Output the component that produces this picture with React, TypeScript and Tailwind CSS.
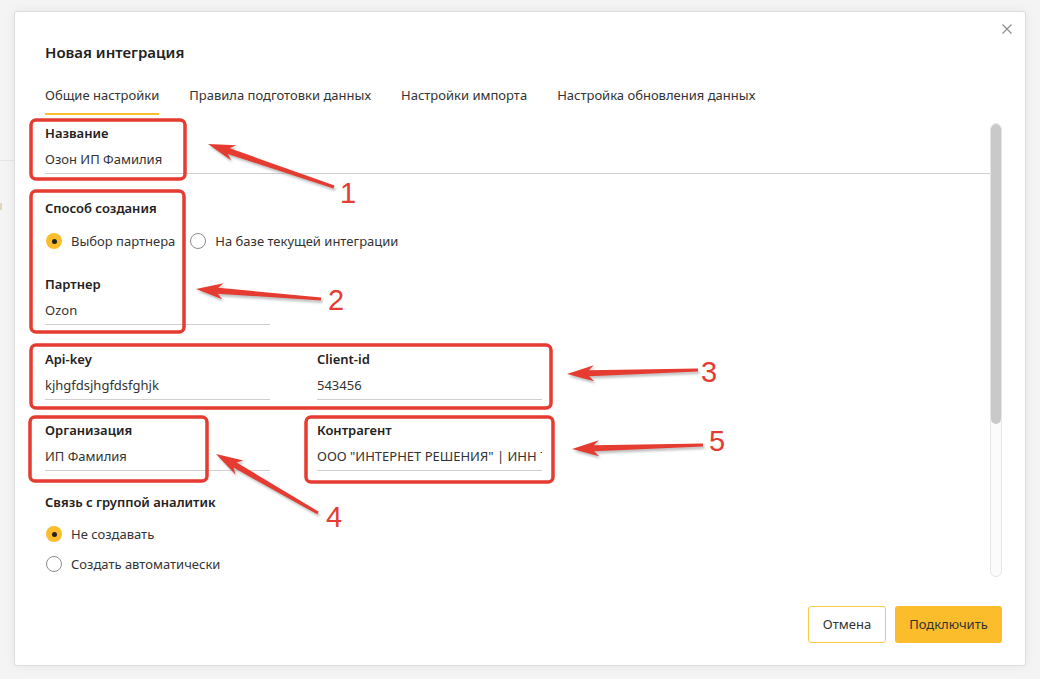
import React from "react";

const font = { fontFamily: '"Noto Sans", "Liberation Sans", sans-serif' };

type Pt = [number, number];

function arrowPoints(tail: Pt, tip: Pt) {
  const dx = tip[0] - tail[0];
  const dy = tip[1] - tail[1];
  const len = Math.hypot(dx, dy);
  const ux = dx / len;
  const uy = dy / len;
  const nx = -uy;
  const ny = ux;
  const L = 22;
  const W = 8;
  const bx = tip[0] - ux * L;
  const by = tip[1] - uy * L;
  const cx = tip[0] - ux * (L + 5);
  const cy = tip[1] - uy * (L + 5);
  const pts: Pt[] = [
    [tail[0] + nx * 1.5, tail[1] + ny * 1.5],
    [bx + nx * 3, by + ny * 3],
    [cx + nx * W, cy + ny * W],
    tip,
    [cx - nx * W, cy - ny * W],
    [bx - nx * 3, by - ny * 3],
    [tail[0] - nx * 1.5, tail[1] - ny * 1.5],
  ];
  return pts.map((p) => p.join(",")).join(" ");
}

const arrows: { tail: Pt; tip: Pt; n: string; x: number; y: number }[] = [
  { tail: [334, 187], tip: [208, 144], n: "1", x: 340, y: 203 },
  { tail: [321, 299], tip: [196, 289], n: "2", x: 328, y: 310 },
  { tail: [698, 370], tip: [567, 374], n: "3", x: 701, y: 382 },
  { tail: [318, 513], tip: [216, 454], n: "4", x: 326, y: 527 },
  { tail: [703, 445], tip: [572, 449], n: "5", x: 709, y: 451 },
];

const boxes = [
  { x: 31, y: 120, w: 154, h: 59 },
  { x: 31, y: 191, w: 153, h: 141 },
  { x: 31, y: 345, w: 520, h: 63 },
  { x: 30, y: 417, w: 177, h: 64 },
  { x: 306, y: 417, w: 247, h: 65 },
];

function Annotations() {
  return (
    <svg className="absolute inset-0 pointer-events-none" width="1040" height="679" viewBox="0 0 1040 679">
      <defs>
        <filter id="sh" x="-20%" y="-50%" width="140%" height="200%">
          <feGaussianBlur stdDeviation="1.2" />
        </filter>
      </defs>
      {boxes.map((b, i) => (
        <rect key={i} x={b.x} y={b.y} width={b.w} height={b.h} rx="5" fill="none" stroke="#e53b30" strokeWidth="3.5" />
      ))}
      {arrows.map((a, i) => (
        <g key={i}>
          <polygon points={arrowPoints(a.tail, a.tip)} fill="#9a9a9a" opacity="0.6" transform="translate(1.5,2.5)" filter="url(#sh)" />
          <polygon points={arrowPoints(a.tail, a.tip)} fill="#e53b30" />
          <text x={a.x} y={a.y} fill="#e53b30" fontSize="29" style={{ fontFamily: '"Liberation Sans", Arial, sans-serif' }}>
            {a.n}
          </text>
        </g>
      ))}
    </svg>
  );
}

function Radio({ checked, label }: { checked?: boolean; label: string }) {
  return (
    <div className="flex items-center gap-[9px]">
      {checked ? (
        <span className="w-[16px] h-[16px] rounded-full bg-[#fbbd2b] flex items-center justify-center">
          <span className="w-[5px] h-[5px] rounded-full bg-[#222]" />
        </span>
      ) : (
        <span className="w-[16px] h-[16px] rounded-full border border-[#8c8c8c] bg-white" />
      )}
      <span className="text-[13px] leading-[16px] text-[#333]">{label}</span>
    </div>
  );
}

function Field({ label, value, className = "" }: { label: string; value: string; className?: string }) {
  return (
    <div className={className}>
      <div className="text-[13px] leading-[16px] font-semibold text-[#222]">{label}</div>
      <div className="mt-[10px] pb-[6px] border-b border-[#cfcfcf] text-[13px] leading-[16px] text-[#333] whitespace-nowrap overflow-hidden">
        {value}
      </div>
    </div>
  );
}

export default function App() {
  const tabs = ["Общие настройки", "Правила подготовки данных", "Настройки импорта", "Настройка обновления данных"];
  return (
    <div className="relative w-[1040px] h-[679px] bg-[#f4f4f4] overflow-hidden pt-[11px] pl-[14px]" style={font}>
      <div className="absolute left-0 top-[160px] w-[14px] h-px bg-[#e6e6e6]" />
      <div className="absolute left-0 top-[203px] w-[2px] h-[7px] bg-[#e3d6bd]" />

      <div className="relative w-[1012px] h-[655px] bg-white border border-[#dcdcdc] rounded-[3px] shadow-[0_0_12px_rgba(0,0,0,0.06)] flex flex-col">
        <svg className="absolute right-[13px] top-[12px]" width="10" height="10" viewBox="0 0 10 10">
          <path d="M0.5 0.5 L9.5 9.5 M9.5 0.5 L0.5 9.5" stroke="#8a8a8a" strokeWidth="1.1" />
        </svg>

        <div className="px-[30px] pt-[30px]">
          <div className="text-[15px] leading-[20px] font-semibold text-[#222]">Новая интеграция</div>
          <div className="mt-[25px] flex gap-[30px]">
            {tabs.map((t, i) => (
              <div
                key={t}
                className={
                  "text-[13px] leading-[16px] text-[#333] pb-[10px] border-b-2 " +
                  (i === 0 ? "border-[#fbbd2b]" : "border-transparent")
                }
              >
                {t}
              </div>
            ))}
          </div>
        </div>

        <div className="flex h-[465px]">
          <div className="flex-1 pl-[30px] overflow-hidden">
            <Field className="mt-[10px]" label="Название" value="Озон ИП Фамилия" />

            <div className="mt-[26px] text-[13px] leading-[16px] font-semibold text-[#222]">Способ создания</div>
            <div className="mt-[17px] flex gap-[15px] pl-px">
              <Radio checked label="Выбор партнера" />
              <Radio label="На базе текущей интеграции" />
            </div>

            <Field className="mt-[27px] w-[225px]" label="Партнер" value="Ozon" />

            <div className="mt-[26px] flex gap-[47px]">
              <Field className="w-[225px]" label="Api-key" value="kjhgfdsjhgfdsfghjk" />
              <Field className="w-[225px]" label="Client-id" value="543456" />
            </div>

            <div className="mt-[22px] flex gap-[47px]">
              <Field className="w-[225px]" label="Организация" value="ИП Фамилия" />
              <Field className="w-[225px]" label="Контрагент" value={'ООО "ИНТЕРНЕТ РЕШЕНИЯ" | ИНН 7707083893'} />
            </div>

            <div className="mt-[23px] text-[13px] leading-[16px] font-semibold text-[#222]">Связь с группой аналитик</div>
            <div className="mt-[16px] pl-px flex flex-col gap-[14px]">
              <Radio checked label="Не создавать" />
              <Radio label="Создать автоматически" />
            </div>
          </div>

          <div className="mt-[8px] mr-[23px] w-[12px] h-[454px] rounded-full border border-[#e6e6e6] bg-[#fbfbfb] flex flex-col overflow-hidden">
            <div className="h-[300px] bg-[#c9c9c9] rounded-full" />
          </div>
        </div>

        <div className="flex justify-end gap-[9px] pr-[23px] pt-[26px]">
          <button className="w-[78px] h-[37px] rounded-[3px] border border-[#fbc84a] bg-white text-[13px] text-[#333]">
            Отмена
          </button>
          <button className="w-[107px] h-[37px] rounded-[3px] bg-[#fbbd2b] text-[13px] text-[#333]">Подключить</button>
        </div>
      </div>

      <Annotations />
    </div>
  );
}
